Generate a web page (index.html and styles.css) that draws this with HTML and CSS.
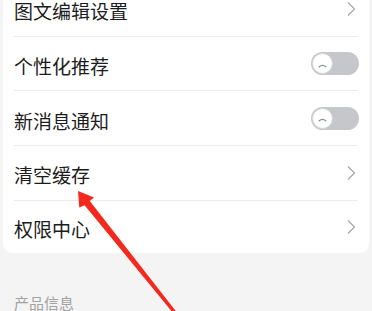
FILE: index.html
```html
<!DOCTYPE html>
<html lang="zh-CN">
<head>
<meta charset="utf-8">
<title>设置</title>
<link rel="stylesheet" href="styles.css">
</head>
<body>
<div class="page">
  <div class="card">
    <div class="row"><span class="label">图文编辑设置</span><svg class="chev" viewBox="0 0 10 16" width="10" height="16"><path d="M2 1.5 L8.5 8 L2 14.5" /></svg></div>
    <div class="row"><span class="label">个性化推荐</span><span class="toggle"><span class="knob"><svg viewBox="0 0 20 20" width="20" height="20"><path d="M6.5 13 Q10 9.8 13.5 13" /></svg></span></span></div>
    <div class="row"><span class="label">新消息通知</span><span class="toggle"><span class="knob"><svg viewBox="0 0 20 20" width="20" height="20"><path d="M6.5 13 Q10 9.8 13.5 13" /></svg></span></span></div>
    <div class="row"><span class="label">清空缓存</span><svg class="chev" viewBox="0 0 10 16" width="10" height="16"><path d="M2 1.5 L8.5 8 L2 14.5" /></svg></div>
    <div class="row last"><span class="label">权限中心</span><svg class="chev" viewBox="0 0 10 16" width="10" height="16"><path d="M2 1.5 L8.5 8 L2 14.5" /></svg></div>
  </div>
  <div class="section-title">产品信息</div>
  <svg class="arrow" viewBox="0 0 372 311" width="372" height="311"><polygon points="78,191 94,197.5 89.8,201 177.3,313 174.7,315 84.6,205.2 79.3,207.5" /></svg>
</div>
</body>
</html>
```
FILE: styles.css
```css
html, body {
  margin: 0;
  padding: 0;
  background: #f4f4f4;
}
body {
  font-family: "Noto Sans CJK SC", "Noto Sans", sans-serif;
  color: #1c1c1c;
  overflow: hidden;
}
.page {
  position: relative;
  width: 372px;
  height: 311px;
  overflow: hidden;
}
.card {
  margin: -18px 3px 0;
  background: #ffffff;
  border-radius: 9px;
  padding: 0 11px;
}
.row {
  box-sizing: border-box;
  height: 54.7px;
  border-bottom: 1px solid #ececec;
  display: flex;
  align-items: center;
  justify-content: space-between;
  padding-top: 5px;
}
.row.last {
  border-bottom: none;
  height: 52px;
}
.label {
  font-size: 19px;
  line-height: 24px;
}
.chev {
  margin-right: 2px;
  fill: none;
  stroke: #a3a3a3;
  stroke-width: 1.1;
  margin-top: -5px;
}
.toggle {
  width: 48px;
  height: 23px;
  border-radius: 12px;
  background: #c5c7cb;
  display: flex;
  align-items: center;
  padding-left: 1px;
  box-sizing: border-box;
  margin-top: -5px;
  margin-right: -1px;
}
.knob {
  width: 21px;
  height: 21px;
  border-radius: 50%;
  background: #ffffff;
  box-sizing: border-box;
  border: 1px solid #d4d5d8;
  display: flex;
  align-items: center;
  justify-content: center;
}
.knob svg {
  fill: none;
  stroke: #8d8f93;
  stroke-width: 1.4;
  stroke-linecap: round;
}
.section-title {
  padding: 40px 14px 0;
  font-size: 15px;
  line-height: 20px;
  color: #a2a2a2;
}
.arrow {
  position: absolute;
  left: 0;
  top: 0;
  fill: #f3291e;
  pointer-events: none;
}
```
